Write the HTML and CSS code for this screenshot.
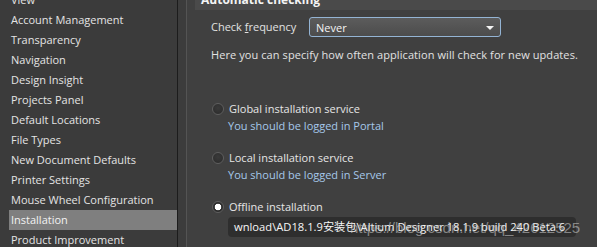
FILE: index.html
```html
<!DOCTYPE html>
<html lang="en">

<head>
    <meta charset="utf-8" />
    <title>Preferences - Installation</title>
    <link rel="stylesheet" href="styles.css">
</head>

<body>
    <div class="window">
        <nav class="sidebar">
            <ul>
                <li>View</li>
                <li>Account Management</li>
                <li>Transparency</li>
                <li>Navigation</li>
                <li>Design Insight</li>
                <li>Projects Panel</li>
                <li>Default Locations</li>
                <li>File Types</li>
                <li>New Document Defaults</li>
                <li>Printer Settings</li>
                <li>Mouse Wheel Configuration</li>
                <li class="active">Installation</li>
                <li>Product Improvement</li>
            </ul>
        </nav>
        <div class="splitter"></div>
        <main class="panel">
            <div class="group-title">Automatic checking</div>
            <div class="group-body">
                <div class="field-row">
                    <label>Check <u>f</u>requency</label>
                    <div class="select">
                        <span>Never</span>
                        <span class="arrow"></span>
                    </div>
                </div>
                <p class="hint">Here you can specify how often application will check for new updates.</p>

                <div class="options">
                    <div class="option">
                        <span class="radio"></span>
                        <div>
                            <div class="option-label">Global installation service</div>
                            <div class="option-note">You should be logged in Portal</div>
                        </div>
                    </div>
                    <div class="option">
                        <span class="radio"></span>
                        <div>
                            <div class="option-label">Local installation service</div>
                            <div class="option-note">You should be logged in Server</div>
                        </div>
                    </div>
                    <div class="option">
                        <span class="radio checked"></span>
                        <div>
                            <div class="option-label">Offline installation</div>
                            <div class="path-box">wnload\AD18.1.9安装包\Altium Designer 18.1.9 build 240 Beta 6</div>
                        </div>
                    </div>
                </div>
            </div>
        </main>
        <div class="watermark">https://blog.csdn.net/qq_42612525</div>
    </div>
</body>

</html>
```

FILE: styles.css
```css
* {
    padding: 0;
    margin: 0;
    box-sizing: border-box;
    font-family: "Open Sans", "Noto Sans CJK SC", sans-serif;
}

html,
body {
    height: 100%;
    overflow: hidden;
}

body {
    background-color: #404040;
    color: #e2e2e2;
    font-size: 11px;
}

.window {
    position: relative;
    display: grid;
    grid-template-columns: 177px 10px 1fr;
    margin-top: -10px;
    height: 257px;
}

/* left list of pages */
.sidebar {
    background-color: #3b3b3b;
}

.sidebar ul {
    list-style: none;
}

.sidebar li {
    height: 20px;
    line-height: 20px;
    margin-left: 9px;
    padding-left: 2px;
    color: #e4e4e4;
    white-space: nowrap;
}

.sidebar li.active {
    background-color: #7f7f7f;
    color: #f2f2f2;
}

.splitter {
    background-color: #3c3c3c;
    border-left: 1px solid #1c1c1c;
    border-right: 1px solid #545454;
}

/* right settings panel */
.panel {
    padding-left: 8px;
}

.group-title {
    height: 20px;
    line-height: 20px;
    padding-left: 6px;
    background-color: #4a4a4a;
    font-weight: bold;
    font-size: 12px;
    color: #f4f4f4;
}

.group-body {
    padding-left: 16px;
}

.field-row {
    display: flex;
    align-items: center;
    height: 20px;
    margin-top: 7px;
}

.field-row label {
    width: 98px;
    line-height: 20px;
}

.select {
    display: flex;
    align-items: center;
    justify-content: space-between;
    width: 192px;
    height: 20px;
    padding: 0 6px 0 6px;
    border: 1px solid #94b4d4;
    border-radius: 3px;
    background: linear-gradient(#5c5c5c, #4c4c4c);
    color: #f4f4f4;
}

.arrow {
    width: 0;
    height: 0;
    border-left: 4px solid transparent;
    border-right: 4px solid transparent;
    border-top: 4px solid #f4f4f4;
    margin-top: 1px;
}

.hint {
    margin-top: 9px;
    line-height: 17px;
    letter-spacing: 0.08px;
}

.options {
    display: flex;
    flex-direction: column;
    gap: 15px;
    margin-top: 37px;
}

.option {
    display: grid;
    grid-template-columns: 17px 1fr;
    padding-left: 1px;
    line-height: 17px;
}

.radio {
    width: 12px;
    height: 12px;
    margin-top: 3px;
    border-radius: 50%;
    border: 1px solid #5e5e5e;
    background: radial-gradient(circle at 50% 40%, #3a3a3a, #2a2a2a);
}

.radio.checked {
    background: radial-gradient(circle, #ffffff 0, #ffffff 3px, #2c2c2c 3.6px);
    border-color: #5e5e5e;
}

.option-label {
    color: #e6e6e6;
}

.option-note {
    margin-left: -1px;
    color: #a6c8ea;
}

.path-box {
    margin-top: 2px;
    margin-left: -1px;
    width: 348px;
    height: 20px;
    line-height: 20px;
    padding-left: 6px;
    border-radius: 4px;
    background-color: #2e2e2e;
    color: #f6f6f6;
    font-size: 11.2px;
    white-space: nowrap;
    overflow: hidden;
}

/* blog watermark stamped over the screenshot */
.watermark {
    position: absolute;
    left: 350px;
    top: 229px;
    font-family: "Liberation Sans", sans-serif;
    font-size: 15px;
    color: rgba(210, 210, 210, 0.55);
    white-space: nowrap;
}
```
